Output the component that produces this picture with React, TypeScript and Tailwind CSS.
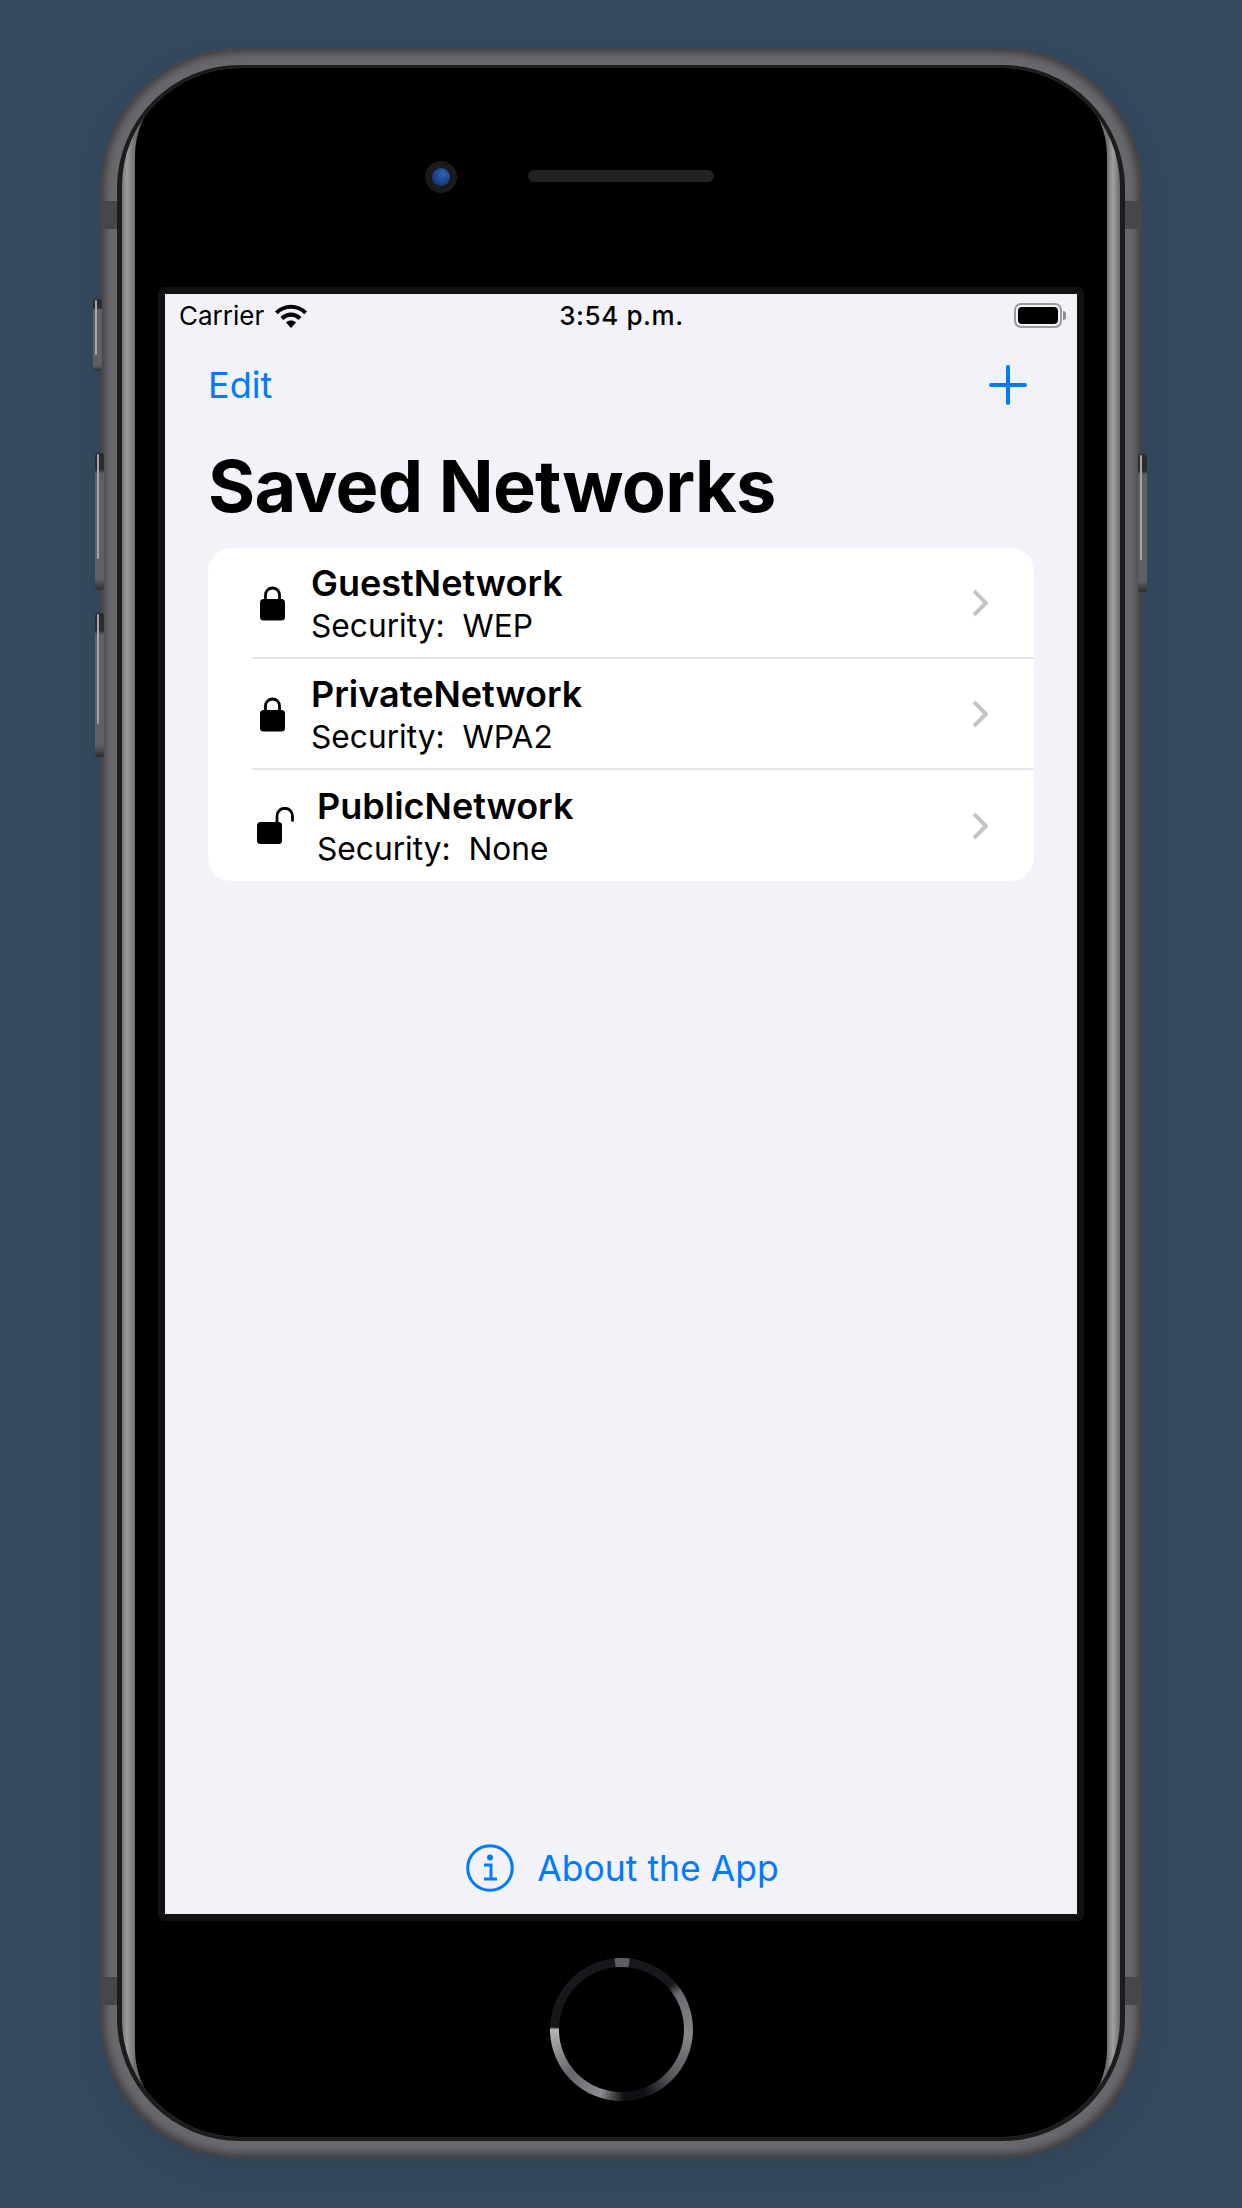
const networks = [
  { name: "GuestNetwork", security: "WEP", locked: true },
  { name: "PrivateNetwork", security: "WPA2", locked: true },
  { name: "PublicNetwork", security: "None", locked: false },
];

function LockIcon() {
  return (
    <svg width="25" height="36" viewBox="0 0 25 36" className="shrink-0">
      <path d="M5.5 15V10a7 7 0 0 1 14 0v5" fill="none" stroke="#000" strokeWidth="2.8" />
      <rect x="0" y="14" width="25" height="21.5" rx="3.5" fill="#000" />
    </svg>
  );
}

function OpenLockIcon() {
  return (
    <svg width="38" height="37" viewBox="0 0 38 37" className="shrink-0">
      <path d="M20 17V9a7.5 7.5 0 0 1 15.5 0v4.5" fill="none" stroke="#000" strokeWidth="2.8" strokeLinecap="round" />
      <rect x="0" y="15" width="25" height="22" rx="3.5" fill="#000" />
    </svg>
  );
}

function Chevron() {
  return (
    <svg width="16" height="28" viewBox="0 0 16 28" className="shrink-0">
      <path d="M2 2l12 12L2 26" fill="none" stroke="#c4c4c7" strokeWidth="4" />
    </svg>
  );
}

function Wifi() {
  return (
    <svg width="34" height="25" viewBox="0 0 34 25">
      <path d="M1 8.5C10 -0.5 24 -0.5 33 8.5l-2.6 2.8C22.800 4 11.200 4 3.600 11.300z" fill="#000" />
      <path d="M6.500 14C12.500 8 21.500 8 27.500 14l-2.800 3C20 12.500 14 12.500 9.300 17z" fill="#000" />
      <path d="M12 19.500c3-2.600 7-2.600 10 0L17 25z" fill="#000" />
    </svg>
  );
}

function Battery() {
  return (
    <div className="flex items-center gap-[1px]">
      <div className="w-[48px] h-[25px] rounded-[7px] border-[2px] border-[#9a9a9c] p-[2px]">
        <div className="w-full h-full rounded-[4px] bg-black" />
      </div>
      <div className="w-[3px] h-[9px] rounded-r-[3px] bg-[#8e8e90]" />
    </div>
  );
}

function InfoIcon() {
  return (
    <svg width="48" height="48" viewBox="0 0 48 48">
      <circle cx="24" cy="24" r="22.300" fill="none" stroke="#007aff" strokeWidth="3" />
      <circle cx="24" cy="13.500" r="3" fill="#007aff" />
      <path d="M18 21h7v14M18 35h13" fill="none" stroke="#007aff" strokeWidth="3" />
    </svg>
  );
}

function SideButton({ className }: { className: string }) {
  return (
    <div
      className={
        "absolute w-[9px] rounded-[3px] bg-[linear-gradient(180deg,#2c2c30_0,#2c2c30_12%,#5f5f65_15%,#5f5f65_92%,#2c2c30_100%)] " +
        className
      }
    >
      <div className="w-[2px] h-[76%] mt-[16%] ml-[2px] bg-[#a5a5aa] rounded-full" />
    </div>
  );
}

export default function App() {
  return (
    <div className="w-[1242px] h-[2208px] overflow-hidden bg-[#35495e] pt-[48px] pl-[100px] font-['Inter',sans-serif]">
      <div className="relative w-[1042px] h-[2110px] rounded-[140px] p-[17px] bg-[#69696d] shadow-[inset_0_0_8px_4px_#38383b,0_12px_30px_rgba(0,0,0,0.08)]">
        <SideButton className="-left-[7px] top-[251px] h-[72px]" />
        <SideButton className="-left-[5px] top-[405px] h-[137px]" />
        <SideButton className="-left-[5px] top-[565px] h-[144px]" />
        <SideButton className="-right-[5px] top-[406px] h-[138px]" />

        {/* antenna bands */}
        <div className="absolute left-0 top-[153px] w-[17px] h-[28px] bg-[#47474b]" />
        <div className="absolute right-0 top-[153px] w-[17px] h-[28px] bg-[#47474b]" />
        <div className="absolute left-0 top-[1929px] w-[17px] h-[28px] bg-[#47474b]" />
        <div className="absolute right-0 top-[1929px] w-[17px] h-[28px] bg-[#47474b]" />

        <div className="w-full h-full rounded-[123px] bg-[#1c1c1c] px-[5px] pt-[3px] pb-[4px]">
          <div className="w-full h-full rounded-[118px] overflow-hidden bg-[linear-gradient(90deg,#7a7a7c_0,#9c9c9e_0.5%,#707072_1.3%,#707072_98.7%,#a0a0a2_99.3%,#6a6a6c_100%)] px-[13px]">
            <div className="w-full h-full rounded-[88px] bg-black flex flex-col">
              <div className="h-[219px] flex items-start pt-[93px] pl-[290px] gap-[71px] shrink-0">
                <div className="w-[32px] h-[32px] rounded-full bg-[#1a1a1c] flex items-center justify-center">
                  <div className="w-[18px] h-[18px] rounded-full bg-[radial-gradient(circle_at_60%_35%,#2f62b8,#10265e)]" />
                </div>
                <div className="w-[186px] h-[12px] mt-[9px] rounded-full bg-[#222223]" />
              </div>

              <div className="mx-[23px] h-[1634px] shrink-0 border-[7px] border-[#111] rounded-[6px]">
                <div className="w-full h-full bg-[#f2f2f8] flex flex-col">
                  <div className="h-[42px] shrink-0 grid grid-cols-3 items-center pl-[14px] pr-[11px]">
                    <div className="flex items-center gap-[10px] text-[26px] text-black">
                      <span>Carrier</span>
                      <Wifi />
                    </div>
                    <div className="text-center text-[26px] font-medium tracking-[0.6px] pr-[2px] text-black">3:54 p.m.</div>
                    <div className="flex justify-end">
                      <Battery />
                    </div>
                  </div>

                  <div className="h-[98px] shrink-0 flex items-center justify-between pl-[43px] pr-[50px] text-[#007aff]">
                    <span className="text-[36px]">Edit</span>
                    <svg width="38" height="40" viewBox="0 0 38 40">
                      <path d="M19 2v36M2 20h34" fill="none" stroke="#007aff" strokeWidth="4" strokeLinecap="round" />
                    </svg>
                  </div>

                  <div className="h-[114px] shrink-0 flex items-center pl-[43px] pb-[11px] text-[72px] font-bold tracking-[-0.7px] text-black">
                    Saved Networks
                  </div>

                  <div className="mx-[43px] bg-white rounded-[24px] shrink-0">
                    {networks.map((network, i) => (
                      <div key={network.name} className="h-[111px] pl-[44px] flex">
                        <div
                          className={
                            "flex-1 flex items-center justify-between pr-[46px] " +
                            (i < networks.length - 1 ? "border-b-[2px] border-[#e6e6ea]" : "")
                          }
                        >
                          <div className={network.locked ? "flex items-center gap-[26px] pl-[8px]" : "flex items-center gap-[22px] pl-[5px]"}>
                            {network.locked ? <LockIcon /> : <OpenLockIcon />}
                            <div className="flex flex-col pt-[2px]">
                              <span className="text-[36px] leading-[43px] font-semibold text-black">{network.name}</span>
                              <span className="text-[31.700px] leading-[41px] text-black whitespace-pre">
                                {"Security:  " + network.security}
                              </span>
                            </div>
                          </div>
                          <Chevron />
                        </div>
                      </div>
                    ))}
                  </div>

                  <div className="flex-1" />

                  <div className="h-[94px] shrink-0 flex items-center justify-center gap-[23px] pl-[3px] pt-[2px] text-[#007aff]">
                    <InfoIcon />
                    <span className="text-[35.5px] relative top-[1px]">About the App</span>
                  </div>
                </div>
              </div>

              <div className="flex-1 flex items-center justify-center">
                <div className="w-[143px] h-[143px] rounded-full p-[9px] bg-[conic-gradient(#5e5e64_0deg,#5e5e64_6deg,#17171c_7deg,#17171c_48deg,#6a6a70_58deg,#85858a_95deg,#55555a_135deg,#101014_160deg,#101014_178deg,#8a8a8f_198deg,#66666c_230deg,#b5b5b8_270deg,#17171c_272deg,#17171c_354deg,#5e5e64_355deg)]">
                  <div className="w-full h-full rounded-full bg-black" />
                </div>
              </div>
            </div>
          </div>
        </div>
      </div>
    </div>
  );
}
